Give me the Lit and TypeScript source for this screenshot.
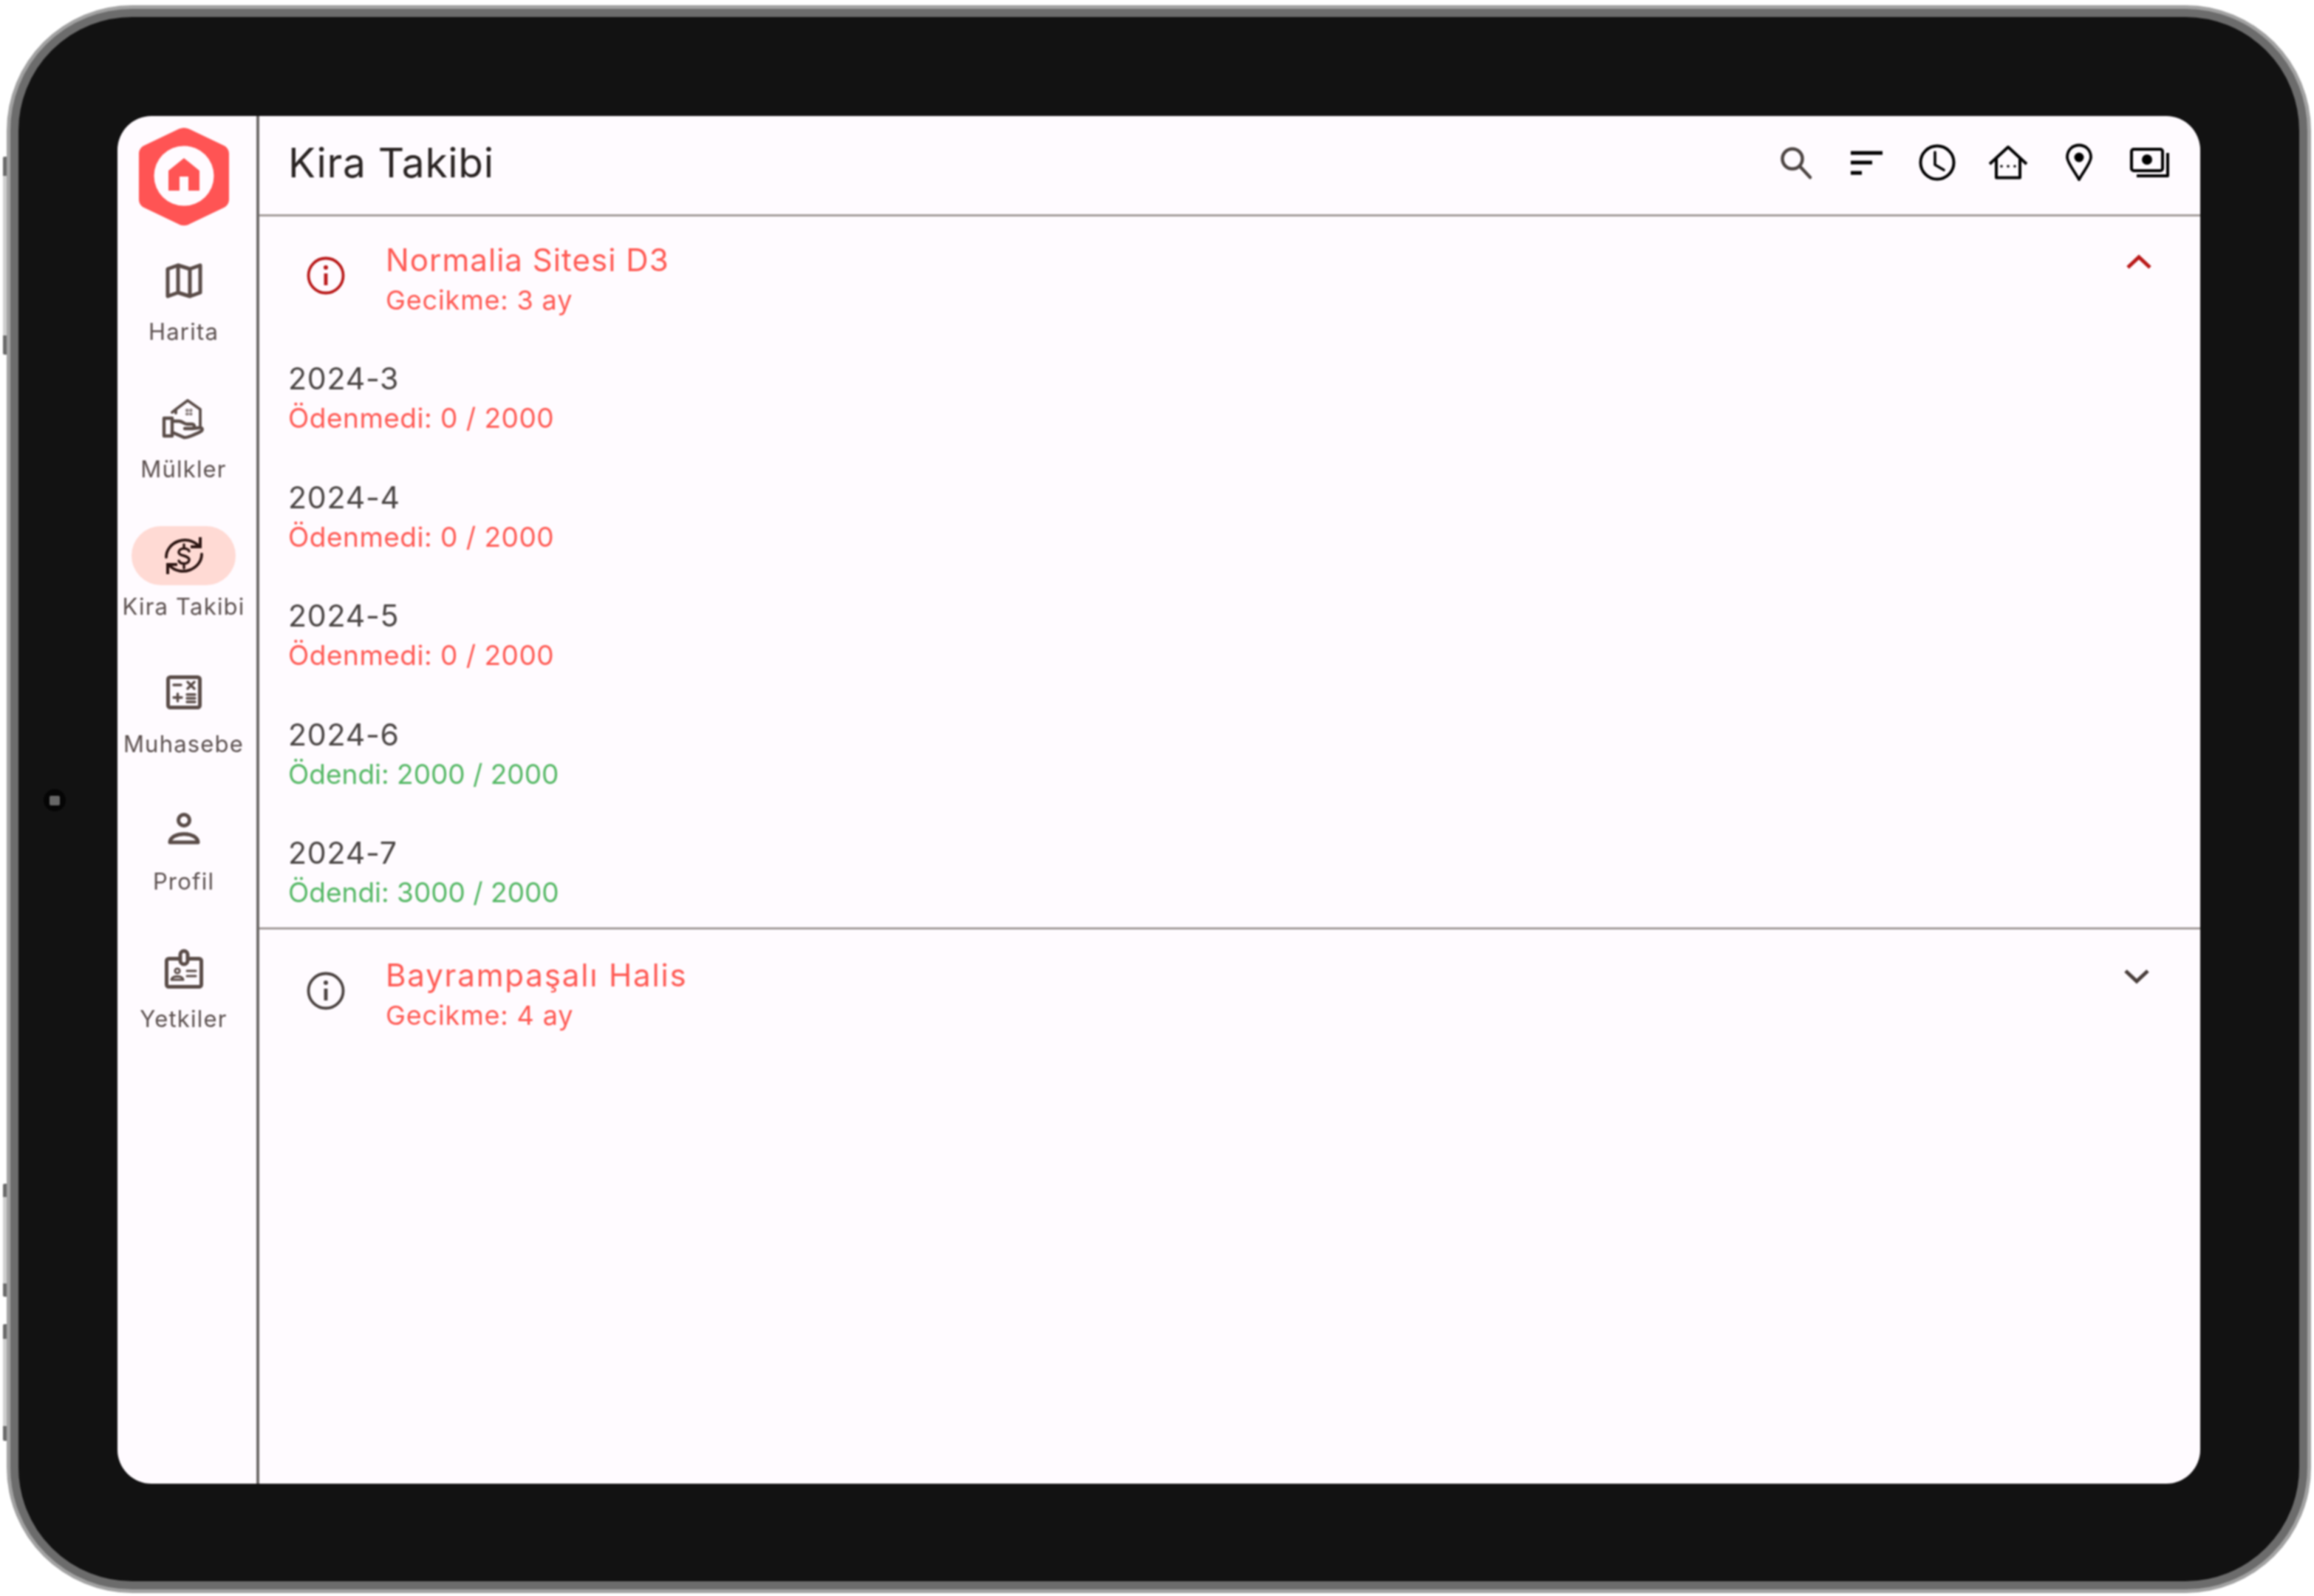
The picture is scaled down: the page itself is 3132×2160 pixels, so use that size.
import { LitElement, html, css, svg } from 'lit';
import { customElement } from 'lit/decorators.js';

const mapIcon = svg`<path d="M8 14 L22 9 L38 14 L52 9 V46 L38 51 L22 46 L8 51 Z M22 9 V46 M38 14 V51" stroke-width="5" />`;
const handIcon = svg`
  <path d="M19 23 V18 L35 6 L52 18 V40 M14 22 L19 18" stroke-width="3.8" />
  <path d="M33 18h2.5v2.5h-2.5zM38 18h2.5v2.5h-2.5zM33 23h2.5v2.5h-2.5zM38 23h2.5v2.5h-2.5z" stroke-width="1.2" />
  <path d="M3 30 H14 V54 H3 Z" stroke-width="4.4" />
  <path d="M14 34 H23 C28 34 30 38 34 38 H41 C45 38 45 44 41 44 H31 M14 49 L30 56 C34 57 50 50 54 47 C56 44 53 42 50 43 L41 44" stroke-width="4.4" />`;
const rentIcon = svg`
  <path d="M6 32 C6 12 34 0 50 17 M54 28 C54 48 26 60 10 43" stroke-width="3.8" />
  <path d="M52 5 V18 H39 M8 55 V42 H21" stroke-width="4" stroke-linecap="butt" stroke-linejoin="miter" />
  <path d="M37 24 C35 19 24 19 23 25 C22 31 38 29 37 36 C36 42 25 42 23 37 M30 15 V20 M30 42 V47" stroke-width="3.4" />`;
const calcIcon = svg`
  <rect x="8.5" y="8.5" width="43" height="41" rx="3" stroke-width="5" />
  <path d="M16 19 H26 M35 15 L44 24 M44 15 L35 24 M16 36 H27 M21.5 31 V41 M34 32 H45 M34 37 H45 M34 42 H45" stroke-width="3.4" />`;
const personIcon = svg`
  <circle cx="30" cy="16" r="7.5" stroke-width="5" />
  <path d="M11 46 C12 31 48 31 49 46 Z" stroke-width="5" />`;
const badgeIcon = svg`
  <rect x="6.5" y="17.5" width="47" height="38" rx="3" stroke-width="5" />
  <rect x="25" y="7" width="10" height="18" rx="5" fill="#fffbff" stroke-width="5" />
  <circle cx="21" cy="34" r="3.2" stroke-width="2.8" />
  <path d="M13 46 C14 40 28 40 29 46 Z M34 34 H46 M34 41 H46" stroke-width="3" />`;

const searchIcon = svg`<circle cx="26" cy="25" r="13.5" stroke="#4d4543" stroke-width="4.5" /><path d="M36 35 L50 50" stroke="#4d4543" stroke-width="4.5" />`;
const filterIcon = svg`<path d="M9 17 H52 M9 30 H38 M9 44 H24" stroke-linecap="butt" stroke-width="5" />`;
const clockIcon = svg`<circle cx="30" cy="30" r="22.5" stroke-width="4" /><path d="M27 16 V33 L39 40" stroke-width="3.6" />`;
const houseIcon = svg`
  <path d="M5 32 L30 9 L55 32 M14 24 V50.5 H46 V24" stroke-linecap="butt" stroke-width="4" />
  <circle cx="21" cy="35" r="1.8" fill="#000" stroke="none" /><circle cx="30" cy="35" r="1.8" fill="#000" stroke="none" /><circle cx="39" cy="35" r="1.8" fill="#000" stroke="none" />`;
const pinIcon = svg`
  <path d="M30 53 C24 42 14 30 14 23 C14 1 46 1 46 23 C46 30 36 42 30 53 Z" stroke-width="3.8" />
  <circle cx="30" cy="23" r="6.5" fill="#000" stroke="none" />`;
const moneyIcon = svg`
  <rect x="5" y="12" width="42" height="29" rx="3" stroke-width="4" />
  <circle cx="26" cy="26" r="7" fill="#000" stroke="none" />
  <path d="M12 48 H54 V17" stroke-width="4" stroke-linecap="butt" />`;

const infoIcon = svg`<circle cx="30" cy="30" r="23.5" stroke-width="3.8" /><path d="M30 27 V43" stroke-width="4.8" stroke-linecap="butt" /><circle cx="30" cy="19" r="3" fill="currentColor" stroke="none" />`;

type Payment = { month: string; text: string; paid: boolean };

const payments: Payment[] = [
  { month: '2024-3', text: 'Ödenmedi: 0 / 2000', paid: false },
  { month: '2024-4', text: 'Ödenmedi: 0 / 2000', paid: false },
  { month: '2024-5', text: 'Ödenmedi: 0 / 2000', paid: false },
  { month: '2024-6', text: 'Ödendi: 2000 / 2000', paid: true },
  { month: '2024-7', text: 'Ödendi: 3000 / 2000', paid: true },
];

const navItems = [
  { label: 'Harita', icon: mapIcon },
  { label: 'Mülkler', icon: handIcon },
  { label: 'Kira Takibi', icon: rentIcon, active: true },
  { label: 'Muhasebe', icon: calcIcon },
  { label: 'Profil', icon: personIcon },
  { label: 'Yetkiler', icon: badgeIcon },
];

// side rails of the frame: top, height, end cap
const rails = [
  { top: 205, height: 268, cap: 26 },
  { top: 1595, height: 153, cap: 18 },
  { top: 1785, height: 158, cap: 20 },
];

@customElement('app-root')
class AppRoot extends LitElement {
  static styles = css`
    :host {
      display: block;
      width: 3132px;
      height: 2160px;
      background: #fff;
      font-family: Inter, 'Liberation Sans', sans-serif;
      box-sizing: border-box;
      padding: 7px 4px 4px 9px;
    }
    * { box-sizing: border-box; }
    svg { display: block; width: 60px; height: 60px; fill: none; stroke: currentColor; stroke-width: 4; stroke-linecap: round; stroke-linejoin: round; flex: none; }
    .device {
      position: relative;
      height: 100%;
      background: #a2a2a2;
      padding: 5px;
      border-radius: 170px;
      filter: blur(0.8px);
    }
    .rail { position: absolute; left: -5px; width: 5px; background: #cfcfcf; border-style: solid; border-color: #6a6a6a; border-width: 0; border-radius: 2px 0 0 2px; }
    .bezel {
      height: 100%;
      background: #121212;
      border: 11px solid #6c6c6c;
      border-radius: 165px;
      padding: 134px 134px 132px 134px;
    }
    .camera {
      position: absolute;
      left: 50px;
      top: 1061px;
      width: 30px;
      height: 30px;
      border-radius: 50%;
      background: #050505;
      display: flex;
      align-items: center;
      justify-content: center;
    }
    .camera i { display: block; width: 14px; height: 13px; background: #666; border-radius: 2px; }
    .screen {
      display: flex;
      height: 100%;
      background: #fffbff;
      border-radius: 46px;
      overflow: hidden;
    }
    .side {
      width: 192px;
      flex: none;
      border-right: 4px solid #6f6b6a;
      display: flex;
      flex-direction: column;
      align-items: center;
      padding: 14px 9px 0 0;
    }
    .logo { width: 124px; height: 136px; margin-bottom: 33px; }
    .logo svg { width: 124px; height: 136px; stroke: none; }
    .nav { width: 100%; height: 186px; display: flex; flex-direction: column; align-items: center; }
    .pill { width: 141px; height: 80px; border-radius: 40px; display: flex; align-items: center; justify-content: center; color: #5a4c48; }
    .active .pill { background: #ffdad4; color: #2c1512; }
    .nav span { margin-top: 9px; font-size: 31px; line-height: 40px; color: #5c5150; white-space: nowrap; letter-spacing: 1.2px; }
    main { flex: 1; min-width: 0; display: flex; flex-direction: column; }
    .top {
      height: 136px;
      border-bottom: 3px solid #a39c9a;
      display: flex;
      align-items: center;
      padding: 0 20px 8px 39px;
    }
    h1 { flex: 1; margin: 0; font-size: 55px; font-weight: 400; color: #2a2423; letter-spacing: 0.7px; }
    .action { width: 96px; display: flex; justify-content: center; color: #000; }
    .group { border-bottom: 3px solid #a39c9a; }
    .group:last-child { border-bottom: none; }
    .head { display: flex; align-items: flex-start; padding: 35px 56px 0 60px; }
    .head .info { color: #4a4240; margin-top: 18px; }
    .head .chev { color: #4a3f3c; margin-top: -2px; }
    .head.open { padding: 32px 53px 0 60px; height: 167px; }
    .open .info, .open .chev { color: #ba1a1a; }
    .open .chev { margin-top: 0; }
    .names { flex: 1; margin-left: 51px; }
    .name { font-size: 42px; line-height: 54px; color: #ff5a54; letter-spacing: 1.85px; }
    .open .name { letter-spacing: 1.05px; }
    .sub { font-size: 36px; line-height: 54px; color: #ff5a54; letter-spacing: 0.85px; }
    .rows { display: flex; flex-direction: column; gap: 52.5px; padding: 25px 39px 20px; }
    .month { font-size: 41px; line-height: 54px; color: #4a4544; letter-spacing: 0.8px; }
    .status { font-size: 37px; line-height: 54px; color: #ff5a54; letter-spacing: 0.5px; }
    .status.paid { color: #55b865; letter-spacing: 0; }
  `;

  renderHead(name: string, sub: string, open: boolean) {
    return html`
      <div class="head ${open ? 'open' : ''}">
        <svg class="info" viewBox="0 0 60 60">${infoIcon}</svg>
        <div class="names">
          <div class="name">${name}</div>
          <div class="sub">${sub}</div>
        </div>
        <svg class="chev" viewBox="0 0 60 60">
          <path d=${open ? 'M15 37 L30 23 L45 37' : 'M15 23 L30 37 L45 23'} stroke-linecap="butt" stroke-linejoin="miter" stroke-width="5" />
        </svg>
      </div>
    `;
  }

  render() {
    return html`
      <div class="device">
        ${rails.map(
          (r) => html`<i class="rail" style="top:${r.top}px;height:${r.height}px;border-top-width:${r.cap}px;border-bottom-width:${r.cap}px"></i>`
        )}
        <div class="camera"><i></i></div>
        <div class="bezel">
          <div class="screen">
            <aside class="side">
              <div class="logo">
                <svg viewBox="0 0 124 136">
                  <path d="M62 2 C65 2 68 3 70 4 L116 26 C120 28 123 32 123 37 V99 C123 104 120 108 116 110 L70 132 C65 135 59 135 54 132 L8 110 C4 108 1 104 1 99 V37 C1 32 4 28 8 26 L54 4 C56 3 59 2 62 2 Z" fill="#ff5454" />
                  <circle cx="62" cy="67" r="40.5" fill="#fffbff" />
                  <path d="M62 43 L83 60 V87 H68 V68 H56 V87 H41 V60 Z" fill="#ff5454" />
                </svg>
              </div>
              ${navItems.map(
                (item) => html`
                  <div class="nav ${item.active ? 'active' : ''}">
                    <div class="pill"><svg viewBox="0 0 60 60">${item.icon}</svg></div>
                    <span>${item.label}</span>
                  </div>
                `
              )}
            </aside>
            <main>
              <div class="top">
                <h1>Kira Takibi</h1>
                ${[searchIcon, filterIcon, clockIcon, houseIcon, pinIcon, moneyIcon].map(
                  (icon) => html`<div class="action"><svg viewBox="0 0 60 60">${icon}</svg></div>`
                )}
              </div>
              <section class="group">
                ${this.renderHead('Normalia Sitesi D3', 'Gecikme: 3 ay', true)}
                <div class="rows">
                  ${payments.map(
                    (p) => html`
                      <div>
                        <div class="month">${p.month}</div>
                        <div class="status ${p.paid ? 'paid' : ''}">${p.text}</div>
                      </div>
                    `
                  )}
                </div>
              </section>
              <section class="group">
                ${this.renderHead('Bayrampaşalı Halis', 'Gecikme: 4 ay', false)}
              </section>
            </main>
          </div>
        </div>
      </div>
    `;
  }
}
